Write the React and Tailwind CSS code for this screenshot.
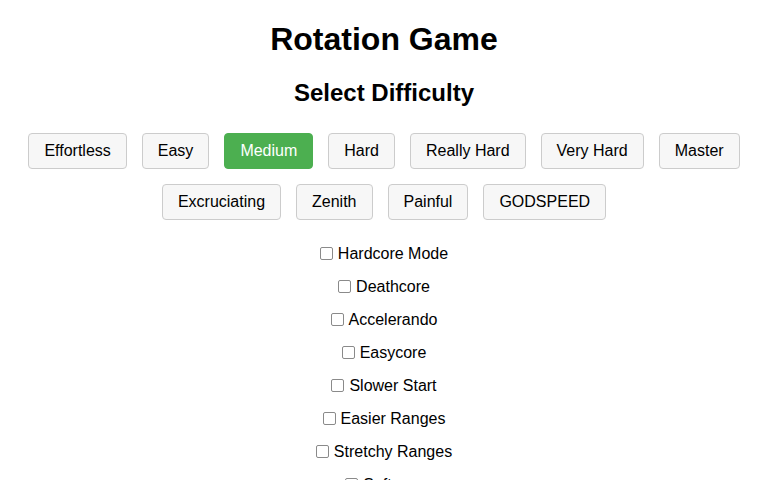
import React, { useState } from "react";

const levels = [
  "Effortless",
  "Easy",
  "Medium",
  "Hard",
  "Really Hard",
  "Very Hard",
  "Master",
  "Excruciating",
  "Zenith",
  "Painful",
  "GODSPEED",
];

const modifiers = [
  "Hardcore Mode",
  "Deathcore",
  "Accelerando",
  "Easycore",
  "Slower Start",
  "Easier Ranges",
  "Stretchy Ranges",
  "Softcore",
];

const App = () => {
  const [level, setLevel] = useState("Medium");
  const [mods, setMods] = useState({});

  return (
    <div className="min-h-[480px] bg-white text-black text-center font-['Liberation_Sans',Arial,sans-serif]">
      <h1 className="pt-[21px] text-[32px] font-bold leading-[37px]">
        Rotation Game
      </h1>
      <h2 className="mt-[21px] text-[24px] font-bold leading-[28px]">
        Select Difficulty
      </h2>

      {/* difficulty buttons */}
      <div className="mt-[26px] flex flex-wrap justify-center gap-[15px]">
        {levels.map((l) => (
          <button
            key={l}
            onClick={() => setLevel(l)}
            className={
              level === l
                ? "rounded-[4px] border border-[#4caf50] bg-[#4caf50] px-[15px] py-2 text-base leading-[18px] text-white"
                : "rounded-[4px] border border-[#cccccc] bg-[#f7f7f7] px-[15px] py-2 text-base leading-[18px] text-black"
            }
          >
            {l}
          </button>
        ))}
      </div>

      {/* modifiers */}
      <div className="mt-[24px] flex flex-col items-center gap-[14px]">
        {modifiers.map((m) => (
          <label key={m} className="flex items-center pr-[4px] text-base leading-[18px] text-black">
            <input
              type="checkbox"
              checked={!!mods[m]}
              onChange={() => setMods({ ...mods, [m]: !mods[m] })}
              className="my-[3px] mr-[5px] ml-[4px] h-[13px] w-[13px] appearance-none rounded-[2px] border border-[#8a8a8a] bg-white checked:border-[#0075ff] checked:bg-[#0075ff]"
            />
            {m}
          </label>
        ))}
      </div>
    </div>
  );
};

export default App;
